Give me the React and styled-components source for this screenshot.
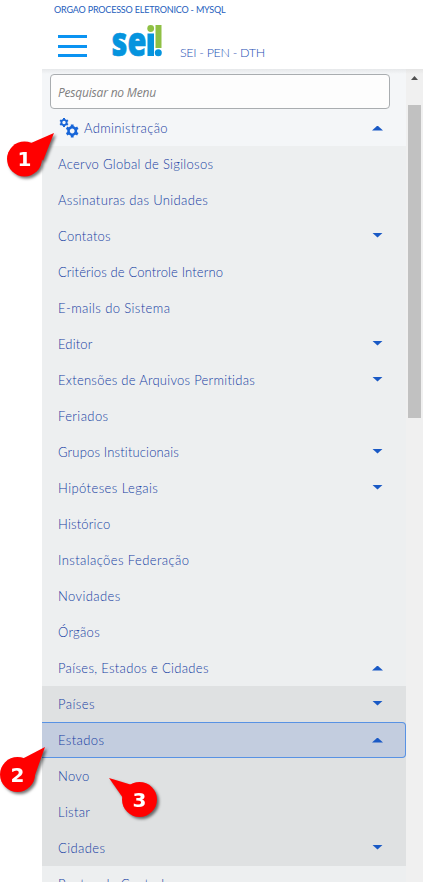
import React from "react";
import styled, { createGlobalStyle, css } from "styled-components";

const Global = createGlobalStyle`
  * { box-sizing: border-box; }
  body { margin: 0; background: #fff; font-family: "Lato", "Open Sans", sans-serif; font-weight: 300; font-variant-ligatures: none; overflow: hidden; }
`;

const Page = styled.div`
  position: relative;
  width: 433px;
  height: 882px;
  overflow: hidden;
  color: #143ca2;
`;

const Header = styled.header`
  height: 69px;
  padding: 3px 0 0 54px;
  background: #fff;
`;

const Organization = styled.div`
  height: 14px;
  line-height: 14px;
  font-size: 9px;
  font-weight: 400;
  letter-spacing: -0.18px;
  color: #2560bd;
  white-space: nowrap;
`;

const Brand = styled.div`
  display: flex;
  align-items: flex-start;
  height: 52px;
`;

const MenuButton = styled.button`
  display: flex;
  flex-direction: column;
  justify-content: space-between;
  width: 29px;
  height: 22px;
  margin: 18px 25px 0 4px;
  padding: 0;
  border: 0;
  background: none;
`;

const Bar = styled.span`
  height: 3px;
  background: #0b93f2;
`;

const Logo = styled.svg`
  width: 52px;
  height: 42px;
  margin-top: 7px;
  overflow: visible;
`;

const Unit = styled.span`
  margin: 28px 0 0 16px;
  font-size: 12.5px;
  line-height: 16px;
  color: #1c50b4;
  white-space: nowrap;
  letter-spacing: -0.32px;
`;

const Sidebar = styled.div`
  display: flex;
  width: 381px;
  height: 813px;
  margin-left: 42px;
  overflow: hidden;
`;

const Menu = styled.nav`
  width: 364px;
  flex: none;
  background: #edeff0;
`;

const MenuTop = styled.div`
  height: 77px;
  background: linear-gradient(#e6e8ea, #f4f6f8 5px);
  padding-top: 5px;
`;

const Search = styled.input`
  display: block;
  width: 340px;
  height: 35px;
  margin: 0 0 1px 8px;
  padding: 2px 8px 0 7px;
  border: 1px solid #a9adb0;
  border-radius: 4px;
  background: #fdfdfd;
  font: italic 12px "Open Sans", sans-serif;
  letter-spacing: -0.2px;
  outline: none;
  &::placeholder { color: #808080; opacity: 1; }
`;

const Row = styled.a`
  display: flex;
  align-items: center;
  height: 36px;
  padding: 0 23px 0 16px;
  font-size: 13px;
  line-height: 18px;
  ${(p) => p.$active && css`
    background: #c3cddf;
    border: 1px solid #5892e4;
    border-left: 0;
    border-radius: 0 4px 4px 0;
    padding-right: 22px;
  `}
`;

const Label = styled.span`
  flex: 1;
  white-space: nowrap;
  letter-spacing: ${(p) => p.$spacing}px;
`;

const Gears = styled.svg`
  width: 20px;
  height: 20px;
  margin: 0 5px 0 1px;
`;

const Arrow = styled.span`
  width: 11px;
  height: 5px;
  margin-top: ${(p) => (p.$up ? 0 : -2)}px;
  background: #1959c5;
  clip-path: ${(p) => (p.$up ? "polygon(50% 0, 100% 100%, 0 100%)" : "polygon(0 0, 100% 0, 50% 100%)")};
`;

const Nest = styled.div`
  background: #dfe1e2;
`;

const Scrollbar = styled.div`
  width: 17px;
  padding: 7px 2px 0;
  background: linear-gradient(#e5e5e5, #f0f0f0 5px);
`;

const ScrollUp = styled.div`
  width: 7px;
  height: 4px;
  margin: 0 auto;
  background: #505050;
  clip-path: polygon(50% 0, 100% 100%, 0 100%);
`;

const Thumb = styled.div`
  height: 313px;
  margin-top: 25px;
  background: #c1c1c1;
`;

const Callout = styled.svg`
  position: absolute;
  left: 0;
  top: ${(p) => p.$top}px;
  width: 180px;
  height: 90px;
  pointer-events: none;
  filter: drop-shadow(2px 2px 1.5px rgba(0, 0, 0, 0.55));
  font: bold 20px "DejaVu Sans", sans-serif;
`;

const ITEMS = [
  ["Acervo Global de Sigilosos", 0.3],
  ["Assinaturas das Unidades", 0.34],
  ["Contatos", 0.25, "down"],
  ["Critérios de Controle Interno", 0.13],
  ["E-mails do Sistema", 0.4],
  ["Editor", 0.15, "down"],
  ["Extensões de Arquivos Permitidas", 0.27, "down"],
  ["Feriados", 0.4],
  ["Grupos Institucionais", 0.16, "down"],
  ["Hipóteses Legais", 0.42, "down"],
  ["Histórico", 0.2],
  ["Instalações Federação", 0.4],
  ["Novidades", 0.4],
  ["Órgãos", 0.3],
  ["Países, Estados e Cidades", 0.32, "up"],
];

const NESTED = [
  ["Países", 0.45, "down"],
  ["Estados", 0.4, "up", true],
  ["Novo", 0.3],
  ["Listar", 0.3],
  ["Cidades", 0.4, "down"],
];

function MenuRow({ item }) {
  const [label, spacing, arrow, active] = item;
  return (
    <Row $active={active}>
      <Label $spacing={spacing}>{label}</Label>
      {arrow && <Arrow $up={arrow === "up"} />}
    </Row>
  );
}

function Gear({ x, y, r, hole }) {
  return (
    <g transform={`translate(${x} ${y})`}>
      <circle r={(r + hole) / 2} fill="none" stroke="#1765d8" strokeWidth={r - hole} />
      {[0, 60, 120, 180, 240, 300].map((a) => (
        <rect key={a} x={-r * 0.28} y={-r * 1.3} width={r * 0.56} height={r * 0.5} fill="#1765d8" transform={`rotate(${a})`} />
      ))}
    </g>
  );
}

function Marker({ top, cx, cy, tip, number }) {
  return (
    <Callout $top={top}>
      <path d={tip} fill="#ff0000" />
      <circle cx={cx} cy={cy} r="17.5" fill="#ff0000" />
      <text x={cx} y={cy + 7} fill="#fff" textAnchor="middle">{number}</text>
    </Callout>
  );
}

export default function App() {
  return (
    <Page>
      <Global />
      <Header>
        <Organization>ORGAO PROCESSO ELETRONICO - MYSQL</Organization>
        <Brand>
          <MenuButton aria-label="Menu"><Bar /><Bar /><Bar /></MenuButton>
          <Logo viewBox="0 0 52 42">
            <text x="-0.5" y="32" fill="#0594de" stroke="#0594de" strokeWidth="0.6" fontFamily="Open Sans" fontWeight="800" fontSize="40" textLength="35" lengthAdjust="spacingAndGlyphs">se</text>
            <rect x="35.5" y="9.5" width="6.5" height="22.5" fill="#0594de" />
            <circle cx="38.7" cy="4.5" r="3.4" fill="#8fc044" />
            <rect x="43.5" y="1" width="6" height="23" fill="#8fc044" />
            <circle cx="46.3" cy="28.7" r="3.5" fill="#0594de" />
          </Logo>
          <Unit>SEI - PEN - DTH</Unit>
        </Brand>
      </Header>
      <Sidebar>
        <Menu>
          <MenuTop>
            <Search placeholder="Pesquisar no Menu" />
            <Row>
              <Gears viewBox="0 0 20 20">
                <Gear x={5} y={4.5} r={3.5} hole={1.7} />
                <Gear x={13.2} y={13} r={5} hole={2.4} />
              </Gears>
              <Label $spacing={0.35}>Administração</Label>
              <Arrow $up />
            </Row>
          </MenuTop>
          {ITEMS.map((item) => <MenuRow key={item[0]} item={item} />)}
          <Nest>{NESTED.map((item) => <MenuRow key={item[0]} item={item} />)}</Nest>
          <MenuRow item={["Pontos de Controle", 0.3]} />
        </Menu>
        <Scrollbar><ScrollUp /><Thumb /></Scrollbar>
      </Sidebar>
      <Marker top={120} cx={24.5} cy={39} tip="M54 13 L31 23 L43 41 Z" number="1" />
      <Marker top={740} cx={17.5} cy={34.5} tip="M45 7 L22 19 L34 38 Z" number="2" />
      <Marker top={770} cx={139.5} cy={29.5} tip="M109 8 L132 15 L123 28 Z" number="3" />
    </Page>
  );
}
